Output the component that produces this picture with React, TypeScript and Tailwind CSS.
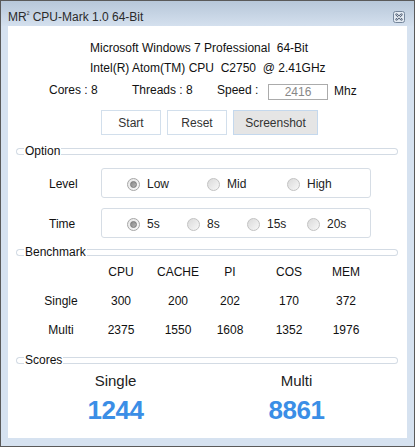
import React from 'react';

const font = { fontFamily: '"Liberation Sans", Arial, sans-serif' };

const GroupHeader = ({ title }: { title: string }) => (
  <div className="flex h-[14px] items-center pl-[8px] pr-[9px]">
    <div className="h-[7px] w-[8px] rounded-l-full border border-r-0 border-[#d3dbe4]" />
    <span className="px-[1px] text-[12px] leading-[14px] text-[#111]">{title}</span>
    <div className="h-[7px] flex-1 rounded-r-full border border-l-0 border-[#d3dbe4]" />
  </div>
);

const Radio = ({ label, checked }: { label: string; checked?: boolean }) => (
  <div className="flex items-center gap-[7px]">
    <div
      className={`flex h-[13px] w-[13px] items-center justify-center rounded-full border ${
        checked
          ? 'border-[#a6a6a6] bg-gradient-to-br from-[#e6e6e6] to-[#fafafa]'
          : 'border-[#c2c2c2] bg-gradient-to-br from-[#dadada] to-[#f8f8f8]'
      }`}
    >
      {checked && (
        <div className="h-[7px] w-[7px] rounded-full border border-[#7a7a7a] bg-gradient-to-br from-[#8a8a8a] to-[#b4b4b4]" />
      )}
    </div>
    <span className="text-[12px] text-[#222]">{label}</span>
  </div>
);

const OptionRow = ({
  label,
  items,
  cell,
}: {
  label: string;
  items: { label: string; checked?: boolean }[];
  cell: string;
}) => (
  <div className="flex items-center pl-[41px]">
    <span className="w-[52px] pt-[2px] text-[12px] text-[#111]">{label}</span>
    <div className="flex h-[30px] w-[270px] items-center rounded-[3px] border border-[#d6dde5] pl-[25px] pt-[2px]">
      {items.map((it) => (
        <div key={it.label} className={cell}>
          <Radio label={it.label} checked={it.checked} />
        </div>
      ))}
    </div>
  </div>
);

const columns = ['w-[60px]', 'w-[60px]', 'w-[54px]', 'w-[50px]', 'w-[68px]', 'w-[46px]'];

const benchRows = [
  ['', 'CPU', 'CACHE', 'PI', 'COS', 'MEM'],
  ['Single', '300', '200', '202', '170', '372'],
  ['Multi', '2375', '1550', '1608', '1352', '1976'],
];

const CloseButton = () => (
  <svg width="12" height="12" viewBox="0 0 12 12">
    <rect x="0.5" y="0.5" width="11" height="11" rx="2" fill="#e4ebf3" stroke="#75869b" />
    <path d="M3.5 3.5 L8.5 8.5 M8.5 3.5 L3.5 8.5" stroke="#55647a" strokeWidth="2.4" strokeLinecap="round" />
    <path d="M3.7 3.7 L8.3 8.3 M8.3 3.7 L3.7 8.3" stroke="#f4f7fa" strokeWidth="0.8" strokeLinecap="round" />
  </svg>
);

export default function App() {
  return (
    <div style={font} className="h-[447px] w-[415px] border border-[#5a5a5a] bg-[#d6e2f0]">
      {/* title bar */}
      <div className="flex h-[25px] items-center justify-between bg-gradient-to-b from-[#b7c7d9] to-[#d4e0ee] pl-[7px] pr-[9px] pt-[6px]">
        <span className="text-[12px] text-[#2b2b2b]">
          MR<sup className="text-[8px]">²</sup> CPU-Mark 1.0 64-Bit
        </span>
        <CloseButton />
      </div>

      {/* client area */}
      <div className="mx-[7px] flex h-[412px] flex-col bg-white text-[12px] text-[#111]">
        <div className="whitespace-pre pl-[82px] pt-[12px] leading-[20px]">
          Microsoft Windows 7 Professional  64-Bit
        </div>
        <div className="whitespace-pre pl-[82px] leading-[20px]">
          Intel(R) Atom(TM) CPU  C2750  @ 2.41GHz
        </div>

        <div className="mt-[2px] flex h-[20px] items-start pl-[41px] leading-[20px]">
          <span className="w-[83px]">Cores : 8</span>
          <span className="w-[85px]">Threads : 8</span>
          <span className="w-[51px]">Speed :</span>
          <div className="mt-[4px] flex h-[16px] w-[60px] items-center justify-center border border-[#ababab] text-[12px] leading-none text-[#888]">
            2416
          </div>
          <span className="ml-[6px] mt-[1px]">Mhz</span>
        </div>

        <div className="mt-[10px] flex gap-[6px] pl-[93px]">
          <div className="flex h-[25px] w-[60px] items-center justify-center border border-[#d2dfec] text-[#333]">
            Start
          </div>
          <div className="flex h-[25px] w-[60px] items-center justify-center border border-[#d2dfec] text-[#333]">
            Reset
          </div>
          <div className="flex h-[25px] w-[85px] items-center justify-center border border-[#c4d8ed] bg-[#e5e5e5] text-[#333]">
            Screenshot
          </div>
        </div>

        <div className="mt-[9px]">
          <GroupHeader title="Option" />
        </div>
        <div className="mt-[10px]">
          <OptionRow
            label="Level"
            cell="w-[80px]"
            items={[{ label: 'Low', checked: true }, { label: 'Mid' }, { label: 'High' }]}
          />
        </div>
        <div className="mt-[10px]">
          <OptionRow
            label="Time"
            cell="w-[60px]"
            items={[{ label: '5s', checked: true }, { label: '8s' }, { label: '15s' }, { label: '20s' }]}
          />
        </div>

        <div className="mt-[7px]">
          <GroupHeader title="Benchmark" />
        </div>
        <div className="mt-[3px] flex flex-col gap-[9px] pl-[23px]">
          {benchRows.map((row, r) => (
            <div key={r} className="flex h-[20px] items-center">
              {row.map((v, c) => (
                <span key={c} className={`${columns[c]} text-center`}>
                  {v}
                </span>
              ))}
            </div>
          ))}
        </div>

        <div className="mt-[13px]">
          <GroupHeader title="Scores" />
        </div>
        <div className="mt-[4px] grid grid-cols-[181px_181px] pl-[17px] text-center">
          <span className="text-[15px] leading-[20px] text-[#222]">Single</span>
          <span className="text-[15px] leading-[20px] text-[#222]">Multi</span>
          <span className="mt-[4px] text-[26px] font-bold leading-[30px] tracking-[-0.5px] text-[#3b8ee6]">
            1244
          </span>
          <span className="mt-[4px] text-[26px] font-bold leading-[30px] tracking-[-0.5px] text-[#3b8ee6]">
            8861
          </span>
        </div>
      </div>
    </div>
  );
}
